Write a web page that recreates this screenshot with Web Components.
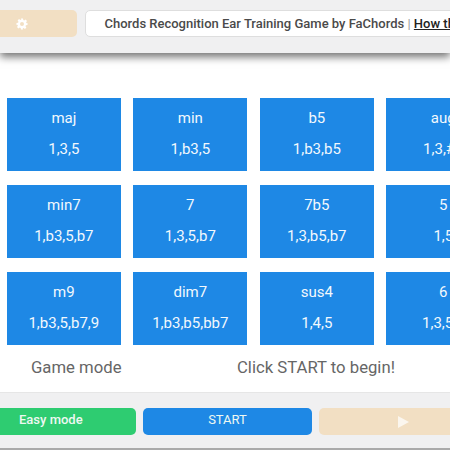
<!DOCTYPE html>
<html>
<head>
<meta charset="utf-8">
<style>
html, body { margin: 0; height: 450px; width: 450px; overflow: hidden; background: #fff; font-family: Roboto, "Liberation Sans", sans-serif; }
</style>
</head>
<body>
<top-bar></top-bar>
<chord-grid></chord-grid>
<status-row></status-row>
<bottom-bar></bottom-bar>

<script>
//barra de arriba: boton de ajustes y titulo
class TopBar extends HTMLElement {
    constructor() {
        super()
        this.attachShadow({mode: 'open'})
        this.shadowRoot.innerHTML = `
        <style>
            :host {
                display: flex;
                box-sizing: border-box;
                width: 450px;
                height: 53px;
                padding: 10px 0 0 0;
                gap: 8px;
                background: #f0f0f1;
                box-shadow: 0 4px 8px rgba(0,0,0,.55);
                position: relative;
            }
            .gear {
                flex: none;
                width: 77px;
                height: 27px;
                background: #f2dfc3;
                border-radius: 0 5px 5px 0;
                display: flex;
                align-items: center;
                justify-content: center;
                box-sizing: border-box;
                padding-right: 33px;
            }
            .title {
                flex: none;
                width: 400px;
                height: 27px;
                box-sizing: border-box;
                background: #fff;
                border: 1px solid #dedede;
                border-radius: 5px 0 0 5px;
                padding-left: 18.5px;
                font-size: 13px;
                font-weight: 500;
                line-height: 25px;
                color: #4a4a4a;
                white-space: nowrap;
                overflow: hidden;
            }
            .sep { color: #999; font-weight: 400; }
            u { color: #222; }
        </style>
        <div class="gear">
            <svg width="12" height="12" viewBox="0 0 24 24"><path fill="#fff" fill-rule="evenodd" d="M10 1h4l.6 3.2 1.9.8 2.7-1.8 2.8 2.8-1.8 2.7.8 1.9L23 10v4l-3.2.6-.8 1.9 1.8 2.7-2.8 2.8-2.7-1.8-1.9.8L14 23h-4l-.6-3.2-1.9-.8-2.7 1.8-2.8-2.8 1.8-2.7-.8-1.9L1 14v-4l3.2-.6.8-1.9-1.8-2.7 2.8-2.8 2.7 1.8 1.9-.8zM12 8a4 4 0 1 0 0 8 4 4 0 0 0 0-8z"/></svg>
        </div>
        <div class="title">Chords Recognition Ear Training Game by FaChords <span class="sep">|</span> <u>How this game works</u></div>
        `
    }
}

//un acorde: nombre arriba y formula abajo
class ChordTile extends HTMLElement {
    constructor() {
        super()
        this.attachShadow({mode: 'open'})
        this.shadowRoot.innerHTML = `
        <style>
            :host {
                display: flex;
                flex-direction: column;
                align-items: center;
                box-sizing: border-box;
                height: 73px;
                padding-top: 11px;
                gap: 13px;
                background: #1e88e5;
                color: #f2f8fd;
                font-size: 15px;
                line-height: 18px;
                white-space: nowrap;
            }
        </style>
        <div><slot name="nombre"></slot></div>
        <div><slot name="formula"></slot></div>
        `
    }
}

class ChordGrid extends HTMLElement {
    constructor() {
        super()
        this.attachShadow({mode: 'open'})
        const acordes = [
            ['maj','1,3,5'],['min','1,b3,5'],['b5','1,b3,b5'],['aug','1,3,#5'],
            ['min7','1,b3,5,b7'],['7','1,3,5,b7'],['7b5','1,3,b5,b7'],['5','1,5'],
            ['m9','1,b3,5,b7,9'],['dim7','1,b3,b5,bb7'],['sus4','1,4,5'],['6','1,3,5,6']
        ]
        this.shadowRoot.innerHTML = `
        <style>
            :host {
                display: grid;
                grid-template-columns: repeat(4, 113.7px);
                gap: 14px 12.8px;
                margin: 45px 0 0 7px;
                width: 500px;
            }
        </style>
        ${acordes.map(a => `<chord-tile><span slot="nombre">${a[0]}</span><span slot="formula">${a[1]}</span></chord-tile>`).join('')}
        `
    }
}

class StatusRow extends HTMLElement {
    constructor() {
        super()
        this.attachShadow({mode: 'open'})
        this.shadowRoot.innerHTML = `
        <style>
            :host {
                display: flex;
                box-sizing: border-box;
                height: 47px;
                padding: 13px 0 0 31px;
                font-size: 16.7px;
                line-height: 19px;
                color: #666;
                white-space: nowrap;
            }
            .modo { width: 206px; }
        </style>
        <div class="modo">Game mode</div>
        <div>Click START to begin!</div>
        `
    }
}

class BottomBar extends HTMLElement {
    constructor() {
        super()
        this.attachShadow({mode: 'open'})
        this.shadowRoot.innerHTML = `
        <style>
            :host {
                display: flex;
                box-sizing: border-box;
                width: 450px;
                height: 58px;
                padding-top: 15px;
                gap: 7px;
                background: #f0f0f1;
                border-top: 1px solid #e6e6e6;
                border-bottom: 2px solid #aaa;
                font-size: 13px;
                font-weight: 500;
                color: #eef8f2;
            }
            div {
                flex: none;
                box-sizing: border-box;
                height: 27px;
                line-height: 24px;
                border-radius: 5px;
                white-space: nowrap;
            }
            .easy { width: 136px; background: #2ecc71; border-radius: 0 5px 5px 0; padding-left: 19px; }
            .start { width: 169px; background: #1e88e5; text-align: center; font-weight: 400; }
            .play { width: 140px; background: #f2dfc3; border-radius: 5px 0 0 5px; display: flex; align-items: center; justify-content: center; padding-left: 28px; }
        </style>
        <div class="easy">Easy mode</div>
        <div class="start">START</div>
        <div class="play"><svg width="11" height="12" viewBox="0 0 11 12"><path fill="#fbf6ee" d="M0 0l11 6-11 6z"/></svg></div>
        `
    }
}

customElements.define('top-bar', TopBar)
customElements.define('chord-tile', ChordTile)
customElements.define('chord-grid', ChordGrid)
customElements.define('status-row', StatusRow)
customElements.define('bottom-bar', BottomBar)
</script>
</body>
</html>
